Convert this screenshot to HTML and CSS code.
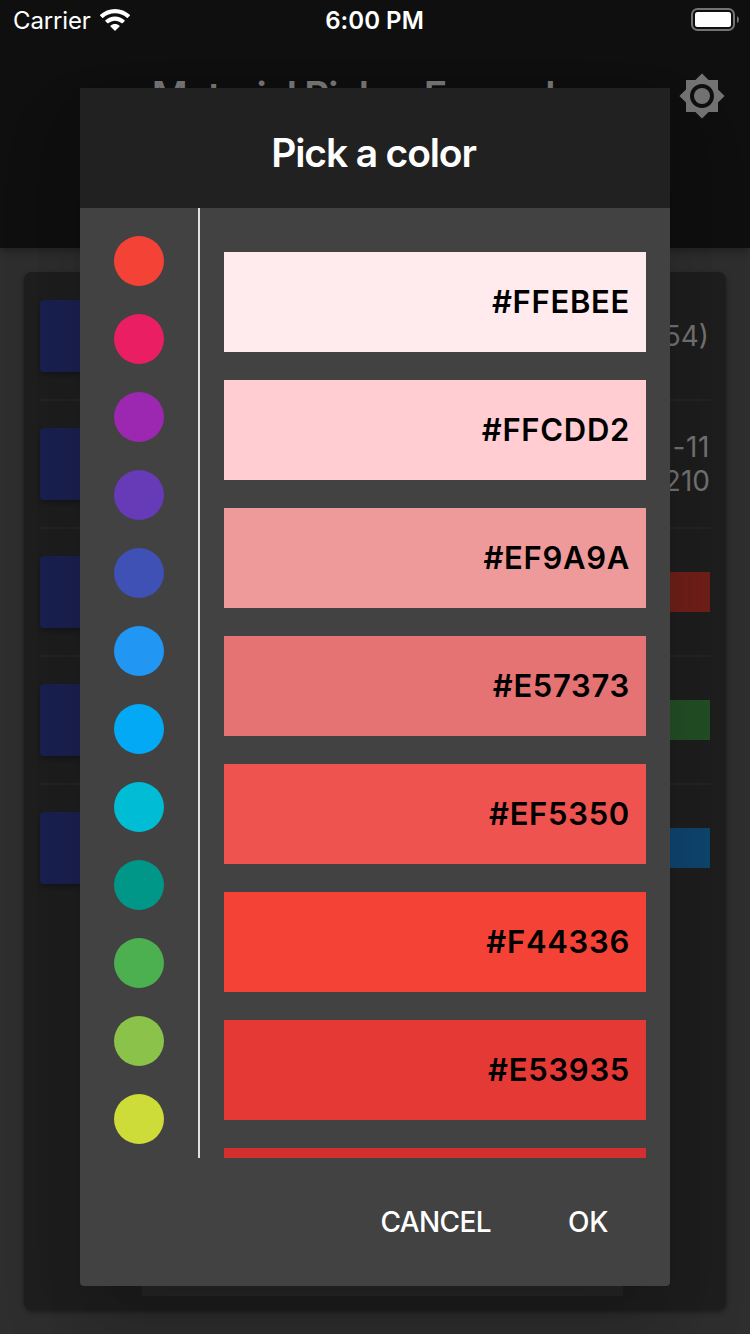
FILE: index.html
```html
<!DOCTYPE html>
<html lang="en">
<head>
<meta charset="utf-8">
<title>Material Picker Example</title>
<link rel="stylesheet" href="styles.css">
</head>
<body>
<div class="screen">
  <header class="appbar">
    <div class="status">
      <div class="carrier"><span class="carrier-name">Carrier</span>
        <svg class="wifi" width="30" height="22" viewBox="0 0 30 22.500" preserveAspectRatio="none"><path fill="#fff" d="M15 0C9.300 0 4.000 2.200 0.200 6Q-.2 6.500.2 7L2.200 9Q2.700 9.400 3.200 9C6.300 5.900 10.500 4.300 15 4.300S23.700 5.900 26.800 9Q27.300 9.400 27.800 9L29.800 7Q30.200 6.500 29.800 6C26 2.200 20.700 0 15 0Z"/><path fill="#fff" d="M15 7.700C11.400 7.700 8.000 9.100 5.400 11.600Q5 12 5.400 12.500L7.500 14.500Q8 14.900 8.400 14.500C10.200 12.800 12.500 11.900 15 11.900S19.800 12.800 21.600 14.500Q22 14.900 22.500 14.500L24.600 12.500Q25 12 24.600 11.600C22 9.100 18.600 7.700 15 7.700Z"/><path fill="#fff" d="M15 15.300C13.300 15.300 11.700 16 10.500 17.100Q10.100 17.500 10.500 18L14.500 22Q15 22.400 15.500 22L19.500 18Q19.900 17.500 19.500 17.100C18.300 16 16.700 15.300 15 15.300Z"/></svg>
      </div>
      <div class="clock">6:00 PM</div>
      <svg class="battery" width="49" height="24" viewBox="0 0 49 24"><rect x="1" y="1" width="42" height="21" rx="5.500" fill="none" stroke="#737373" stroke-width="2"/><rect x="4" y="4" width="36" height="15" rx="2.500" fill="#fff"/><path d="M46 8q2 1 2 3.500T46 15z" fill="#737373"/></svg>
    </div>
    <div class="toolbar">
      <h1 class="app-title">Material Picker Example</h1>
      <svg class="brightness" width="48" height="48" viewBox="0 0 24 24"><path fill="#737373" d="M20 15.310L23.310 12 20 8.690V4h-4.690L12 .69 8.690 4H4v4.690L.69 12 4 15.310V20h4.690L12 23.310 15.310 20H20v-4.690zM12 18c-3.310 0-6-2.690-6-6s2.690-6 6-6 6 2.690 6 6-2.690 6-6 6z"/><circle cx="12" cy="12" r="4" fill="#737373"/></svg>
    </div>
  </header>
  <main class="content">
    <section class="card">
      <div class="row"><div class="button"></div><div class="value first">Color(0xff443a54)</div></div>
      <div class="row"><div class="button"></div><div class="value"><span class="spaced">2-11</span><br>210</div></div>
      <div class="row"><div class="button"></div><div class="swatch red"></div></div>
      <div class="row"><div class="button"></div><div class="swatch green"></div></div>
      <div class="row"><div class="button"></div><div class="swatch blue"></div></div>
      <div class="panel"></div>
    </section>
  </main>
</div>
<div class="dialog">
  <div class="dialog-head">Pick a color</div>
  <div class="picker">
    <div class="hues">
      <i class="dot c1"></i><i class="dot c2"></i><i class="dot c3"></i><i class="dot c4"></i><i class="dot c5"></i><i class="dot c6"></i><i class="dot c7"></i><i class="dot c8"></i><i class="dot c9"></i><i class="dot c10"></i><i class="dot c11"></i><i class="dot c12"></i>
    </div>
    <div class="shades">
      <div class="shade s1">#FFEBEE</div>
      <div class="shade s2">#FFCDD2</div>
      <div class="shade s3">#EF9A9A</div>
      <div class="shade s4">#E57373</div>
      <div class="shade s5">#EF5350</div>
      <div class="shade s6">#F44336</div>
      <div class="shade s7">#E53935</div>
      <div class="shade s8"></div>
    </div>
  </div>
  <div class="actions"><span class="cancel">CANCEL</span><span class="ok">OK</span></div>
</div>
</body>
</html>
```
FILE: styles.css
```css
* { box-sizing: border-box; }
body { margin: 0; width: 750px; height: 1334px; overflow: hidden; position: relative; background: #2e2e2e; font-family: Inter, Roboto, sans-serif; }
.screen { width: 750px; height: 1334px; display: flex; flex-direction: column; }
.appbar { height: 248px; background: #0f0f0f; box-shadow: 0 3px 8px rgba(0,0,0,.3); flex: none; }
.status { height: 40px; display: grid; grid-template-columns: 1fr auto 1fr; align-items: center; padding: 0 10px 0 13px; color: #fff; font-size: 24px; line-height: 38px; }
.carrier { display: flex; align-items: center; gap: 9px; letter-spacing: -.15px; }
.carrier-name, .clock { padding-top: 2px; }
.clock { font-weight: 600; letter-spacing: .05px; margin-left: -4px; }
.battery { justify-self: end; }
.toolbar { height: 112px; display: grid; grid-template-columns: 72px 1fr 96px; align-items: center; }
.app-title { grid-column: 2; margin: 0; text-align: center; font-size: 39px; line-height: 48px; font-weight: 600; letter-spacing: -1.2px; color: #737373; white-space: nowrap; padding-left: 2px; }
.brightness { justify-self: center; }
.content { flex: 1; padding: 24px; }
.card { height: 1038px; border-radius: 8px; background: #1e1e1e; padding: 1px 16px 0; display: flex; flex-direction: column; box-shadow: 0 2px 5px rgba(0,0,0,.4); }
.row { height: 128px; flex: none; display: flex; align-items: center; justify-content: space-between; border-bottom: 2px solid #242424; }
.row:nth-child(5) { border-color: transparent; }
.button { width: 300px; height: 72px; background: #1a2150; border-radius: 4px; box-shadow: 0 3px 5px rgba(0,0,0,.25); }
.value { color: #737373; font-size: 28px; line-height: 34px; text-align: right; }
.value.first { padding-right: 1px; }
.spaced { letter-spacing: .6px; }
.swatch { width: 200px; height: 40px; }
.red { background: #701f19; }
.green { background: #234f25; }
.blue { background: #0f456f; }
.panel { width: 481px; height: 330px; background: #262626; margin: auto 0 14px 102px; }
.dialog { position: absolute; left: 80px; top: 88px; width: 590px; height: 1198px; background: #424242; border-radius: 0 0 4px 4px; box-shadow: 0 48px 76px 6px rgba(0,0,0,.14), 0 30px 60px -10px rgba(0,0,0,.08); display: flex; flex-direction: column; }
.dialog-head { height: 120px; flex: none; background: #212121; color: #fff; display: flex; align-items: center; justify-content: center; padding: 8px 3px 0 0; font-size: 39px; font-weight: 580; letter-spacing: -1.15px; }
.picker { height: 950px; flex: none; display: flex; overflow: hidden; }
.hues { width: 120px; border-right: 2px solid #e0e0e0; padding-top: 28px; display: flex; flex-direction: column; align-items: center; gap: 28px; }
.dot { width: 50px; height: 50px; flex: none; border-radius: 50%; }
.c1 { background: #f44336; } .c2 { background: #e91e63; } .c3 { background: #9c27b0; } .c4 { background: #673ab7; }
.c5 { background: #3f51b5; } .c6 { background: #2196f3; } .c7 { background: #03a9f4; } .c8 { background: #00bcd4; }
.c9 { background: #009688; } .c10 { background: #4caf50; } .c11 { background: #8bc34a; } .c12 { background: #cddc39; }
.shades { flex: 1; padding: 44px 24px 0; display: flex; flex-direction: column; gap: 28px; }
.shade { height: 100px; flex: none; display: flex; align-items: center; justify-content: flex-end; padding: 0 16px 2px 0; font-size: 31px; font-weight: 630; letter-spacing: .7px; color: #000; }
.s1 { background: #ffebee; } .s2 { background: #ffcdd2; } .s3 { background: #ef9a9a; } .s4 { background: #e57373; }
.s5 { background: #ef5350; } .s6 { background: #f44336; } .s7 { background: #e53935; } .s8 { background: #d32f2f; }
.actions { flex: 1; display: flex; align-items: center; justify-content: flex-end; gap: 77px; padding: 0 62px 1px 0; color: #fff; font-size: 28px; font-weight: 550; }
.cancel { letter-spacing: -.6px; }
.ok { letter-spacing: -.4px; }
```
